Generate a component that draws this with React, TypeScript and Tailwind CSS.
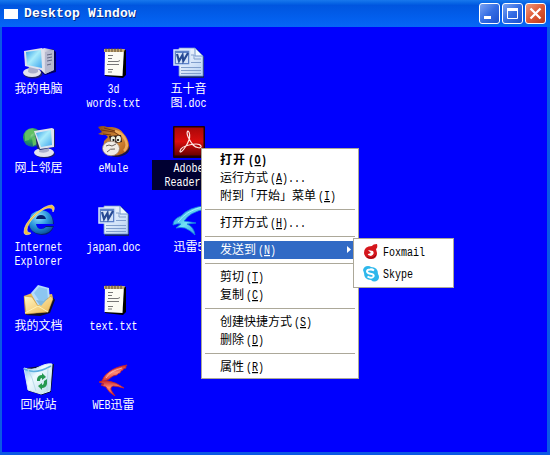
import React from "react";

// Renders Chinese runs full width and Latin runs as tall half-width cells.
function Txt({ children, bold = false, underline = false }: { children: string; bold?: boolean; underline?: boolean }) {
  const runs = children.match(/[\x20-\x7e]+|[^\x20-\x7e]+/g) ?? [];
  return (
    <>
      {runs.map((r, i) =>
        /^[\x20-\x7e]/.test(r) ? (
          <span
            key={i}
            className={`inline-block origin-[50%_75%] scale-y-[1.2] font-['Liberation_Mono',monospace] text-[10px] leading-[12px] whitespace-pre ${
              bold ? "tracking-[0.5px]" : ""
            } ${underline ? "underline underline-offset-1" : ""}`}
          >
            {r}
          </span>
        ) : (
          <span key={i} className={bold ? "tracking-[1px]" : ""}>
            {r}
          </span>
        )
      )}
    </>
  );
}

function Svg({ children, size = 32 }: { children: React.ReactNode; size?: number }) {
  return (
    <svg width={size} height={size} viewBox={`0 0 ${size} ${size}`} className="block shrink-0 overflow-visible">
      {children}
    </svg>
  );
}

function Defs() {
  return (
    <svg width="0" height="0" className="absolute">
      <defs>
        <linearGradient id="screen" x1="0" y1="0" x2="1" y2="1">
          <stop offset="0" stopColor="#2f9be8" />
          <stop offset=".45" stopColor="#a9ecfb" />
          <stop offset="1" stopColor="#3fa6ee" />
        </linearGradient>
        <linearGradient id="case" x1="0" y1="0" x2="1" y2="0">
          <stop offset="0" stopColor="#f4f3f7" />
          <stop offset="1" stopColor="#9297b4" />
        </linearGradient>
        <radialGradient id="globe" cx=".4" cy=".3" r=".8">
          <stop offset="0" stopColor="#a6e39c" />
          <stop offset=".45" stopColor="#2c9e55" />
          <stop offset="1" stopColor="#104c9e" />
        </radialGradient>
        <linearGradient id="red" x1="0" y1="0" x2="0" y2="1">
          <stop offset="0" stopColor="#a90808" />
          <stop offset=".5" stopColor="#d90e0e" />
          <stop offset="1" stopColor="#690000" />
        </linearGradient>
        <linearGradient id="page" x1="0" y1="0" x2="1" y2="1">
          <stop offset="0" stopColor="#ffffff" />
          <stop offset="1" stopColor="#b4d0f4" />
        </linearGradient>
        <radialGradient id="ie" cx=".4" cy=".3" r=".8">
          <stop offset="0" stopColor="#91e0ff" />
          <stop offset=".5" stopColor="#2995dd" />
          <stop offset="1" stopColor="#06458e" />
        </radialGradient>
        <linearGradient id="folder" x1="0" y1="0" x2="1" y2="1">
          <stop offset="0" stopColor="#fff8c8" />
          <stop offset="1" stopColor="#eeb74f" />
        </linearGradient>
        <linearGradient id="bin" x1="0" y1="0" x2="1" y2="1">
          <stop offset="0" stopColor="#6bb6ec" />
          <stop offset=".4" stopColor="#eefaff" />
          <stop offset="1" stopColor="#b9d9e9" />
        </linearGradient>
        <linearGradient id="mule" x1="0" y1="0" x2="1" y2="1">
          <stop offset="0" stopColor="#8b4814" />
          <stop offset=".55" stopColor="#dc8f3b" />
          <stop offset="1" stopColor="#a45215" />
        </linearGradient>
        <linearGradient id="bluebird" x1="0" y1="0" x2="1" y2="1">
          <stop offset="0" stopColor="#1688df" />
          <stop offset=".5" stopColor="#72e2f5" />
          <stop offset="1" stopColor="#1977d7" />
        </linearGradient>
        <linearGradient id="redbird" x1="0" y1="0" x2="0" y2="1">
          <stop offset="0" stopColor="#c8262c" />
          <stop offset=".45" stopColor="#ff8b78" />
          <stop offset="1" stopColor="#d0262a" />
        </linearGradient>
      </defs>
    </svg>
  );
}

const Computer = () => (
  <Svg>
    <path d="M18 3l12-1 3 3v20l-11 3-4-3z" fill="#000060" />
    <path d="M18 3l3-2 10 2v20l-9 4-4-4z" fill="url(#case)" />
    <path d="M22 5l9-2v20l-9 4z" fill="#b6b9cf" />
    <path d="M24 8l5-1M24 11l5-1M24 14l5-1M24 18l4-1" stroke="#626885" />
    <ellipse cx="10" cy="27" rx="9.5" ry="4.5" fill="#202067" />
    <ellipse cx="9" cy="25.5" rx="9" ry="4.5" fill="#e3e3ec" />
    <path d="M6 19l9 2v4q-5 3-10 0z" fill="#aaaec9" />
    <path d="M1 4l18-3 2 2v19l-3 1-16-4z" fill="#dfe2ed" />
    <path d="M3 5l15-2 1 18-15-3z" fill="url(#screen)" />
  </Svg>
);

const Network = () => (
  <Svg>
    <circle cx="9.5" cy="11.5" r="9.5" fill="url(#globe)" />
    <path d="M2 8q3-5 7-5l3 3-4 3-2 5-4 1zM9 12l5-2v8l-4 2z" fill="#62bf62" />
    <ellipse cx="22" cy="28" rx="10" ry="4" fill="#202067" />
    <ellipse cx="21" cy="26.5" rx="10" ry="4.5" fill="#e4e4ee" />
    <path d="M17 20l9-1v6q-4 3-10 1z" fill="#a9aecb" />
    <path d="M12 6l17-4 3 2v17l-15 3-3-2z" fill="#202868" />
    <path d="M11 5l18-3 2 1v18l-14 2z" fill="#dfe3ef" />
    <path d="M13 7l15-3 1 15-11 2z" fill="url(#screen)" />
  </Svg>
);

const Note = () => (
  <Svg>
    <path d="M8 3h20v25l-3 3-18-2z" fill="#000" />
    <path d="M7 2h19l-1.5 27-18-1z" fill="#fbfbf4" />
    <path d="M6 2h21l-1 3H6z" fill="#c4aa72" />
    <path d="M8 1v4M11 1v4M14 1v4M17 1v4M20 1v4M23 1v4" stroke="#5c4934" strokeWidth="1" />
    <path d="M10 8.5h5M10 11.5h4M10 14.5h10l2-1M9 17.5h12M10 22.5h5M10 25h4" stroke="#777" strokeWidth="1" fill="none" />
  </Svg>
);

const Word = () => (
  <Svg>
    <path d="M7 2h17l7 8v21H7z" fill="#101d72" />
    <path d="M6 1h16l8 8v20H6z" fill="url(#page)" stroke="#6d90c8" strokeWidth=".8" />
    <path d="M22 1v8h8z" fill="#eff6ff" stroke="#7396cc" />
    <path d="M18 8h3v4h7M18 15.5h10M8 20.5h20M8 23.5h20M8 26.5h20" stroke="#829fcd" fill="none" />
    <path d="M1 3h16v15H1z" fill="#5f83c8" stroke="#d5e5fb" strokeWidth="1.5" />
    <path d="M3 6h12v10H3z" fill="#d5e4f8" />
    <path d="M4 7l2 7 3.5-6 .8 6L15 6" fill="none" stroke="#264993" strokeWidth="2.2" />
  </Svg>
);

const Mule = () => (
  <Svg>
    <path d="M9 27q6 6 15 3 7-2 8-8l-4-9-7-6z" fill="#15124f" />
    <path d="M0 1q5-2 9 0l5 0q8 1 11 6 5 5 6 12 0 6-7 9-8 3-14 0-6-4-4-13l4-4q-2-3-6-2L0 8l4-2z" fill="url(#mule)" />
    <path d="M17 5q7 2 10 8 4 7-1 12" stroke="#f0ad5c" strokeWidth="2.5" fill="none" />
    <path d="M3 4l13 2 6 4M6 2l11 3M5 8l8 1" stroke="#713510" fill="none" />
    <path d="M11 10l12-1 1 7-11 2z" fill="#30211c" />
    <ellipse cx="15" cy="13.5" rx="2.3" ry="3.2" fill="#eef0e4" />
    <ellipse cx="20.5" cy="13" rx="2.4" ry="3.2" fill="#eef0e4" />
    <circle cx="15.5" cy="14" r="1.1" />
    <circle cx="20" cy="14" r="1.1" />
    <ellipse cx="13" cy="22.5" rx="8.5" ry="7.3" fill="#f0ece7" stroke="#8d7465" strokeWidth=".7" />
    <path d="M9 26q3-4 8-3M8 20q3-2 6 0l4-2" stroke="#6b625e" fill="none" />
  </Svg>
);

const Adobe = () => (
  <Svg>
    <rect x="0" y="0" width="32" height="32" rx="1" fill="#210008" />
    <rect x="1.5" y="1.5" width="29" height="28" fill="url(#red)" />
    <path d="M15 5c-3 2 2 10 5 14 3 3 9 4 8 1-2-4-20-1-21 5 0 4 7-5 9-11 1-3 1-8-1-9z" fill="none" stroke="#ffe9e5" strokeWidth="1.2" />
  </Svg>
);

const Explorer = () => (
  <Svg>
    <path d="M31 19H13q1 5 5 5 3 0 5-3h8q-3 9-12 9Q7 29 6 18 7 7 18 6q12 1 13 13z" fill="#041f6d" />
    <path d="M30 19H13q1 5 5 5 3 0 5-2h7q-3 7-12 7Q6 28 6 17 7 6 18 5q12 1 12 14zM13 14h10q-1-4-5-4t-5 4z" fill="url(#ie)" fillRule="evenodd" />
    <path d="M7 29q-6 2-6-2 0-8 10-17Q22 0 29 0q4 2 1 7 0-4-3-4-5-1-14 7-9 9-9 15 0 3 4 3z" fill="#f3bd3e" stroke="#fff2a3" strokeWidth=".6" />
  </Svg>
);

const Documents = () => (
  <Svg>
    <path d="M3 31L1 14l8-4 20 2 3 4-5 13-10 3z" fill="#11102a" />
    <path d="M1 12l8-3 6 3 14-2 1 4-5 14-23 2z" fill="#e9b957" />
    <path d="M8 9l7-8 11 3 1 13-12 5z" fill="#b5dcff" />
    <path d="M11 9l5-6 8 2 1 10-8 3z" fill="#8cc6f0" />
    <path d="M1 12l8 1 6 9 13-10 2 3-5 13-22 2z" fill="url(#folder)" stroke="#b78426" strokeWidth=".5" />
    <path d="M16 20l-3-4 7 1 5-3-7 8z" fill="#81b9df" />
    <path d="M2 29l13-7 10 6" stroke="#fff2b5" fill="none" />
  </Svg>
);

const Recycle = () => (
  <Svg>
    <path d="M4 5L31 1l-3 28-9 3-14-4z" fill="#080e35" />
    <path d="M1 5q8 3 15-1 8-4 13-3l-2 27-9 3-13-4z" fill="url(#bin)" stroke="#d6edf8" />
    <path d="M1 6q11 6 27-3" fill="none" stroke="#5eafe0" strokeWidth="1.5" />
    <path d="M5 7l4 8 4 13M25 5l-1 23" stroke="#badbea" fill="none" />
    <path d="M14 18V16q1-4 5-4v-2l4 4-4 3v-2q-2 0-2 3zM24 16v5q-1 4-5 4v2l-4-4 4-3v2q2 0 2-4z" fill="#25984f" />
  </Svg>
);

const RedBird = () => (
  <Svg>
    <path d="M29 2q-2 2-1 3-3 0-3 2-2 0-3 3-2 0-3 2-4 0-8 4l-6 3-1-1q2-6 7-9 6-5 18-7z" fill="url(#redbird)" stroke="#c52327" strokeWidth=".8" />
    <path d="M1 19q4-2 9-1 8 1 16 7-7-2-11-2-3 1-2 4l4 6q-7-4-9-9l-5-2 3-1z" fill="url(#redbird)" stroke="#c52327" strokeWidth=".8" />
    <path d="M24 5Q12 8 8 15" stroke="#ffc9be" strokeOpacity=".7" fill="none" />
  </Svg>
);

const BlueBird = () => (
  <Svg>
    <path d="M32 1Q16 2 8 11 0 14 0 20q5-2 8-1l-5 4q5-1 9 0 5 2 10 7-1-8-8-11l9-1-12-2Q17 7 32 4z" fill="url(#bluebird)" stroke="#1687df" strokeWidth=".8" />
    <path d="M29 2Q13 6 5 17" stroke="#9ef1ff" fill="none" />
  </Svg>
);

const columns = [
  [
    { icon: <Computer />, lines: ["我的电脑"] },
    { icon: <Network />, lines: ["网上邻居"] },
    { icon: <Explorer />, lines: ["Internet", "Explorer"] },
    { icon: <Documents />, lines: ["我的文档"] },
    { icon: <Recycle />, lines: ["回收站"] },
  ],
  [
    { icon: <Note />, lines: ["3d", "words.txt"] },
    { icon: <Mule />, lines: ["eMule"] },
    { icon: <Word />, lines: ["japan.doc"] },
    { icon: <Note />, lines: ["text.txt"] },
    { icon: <RedBird />, lines: ["WEB迅雷"] },
  ],
  [
    { icon: <Word />, lines: ["五十音", "图.doc"] },
    { icon: <Adobe />, lines: ["Adobe", "Reader 9"], selected: true },
    { icon: <BlueBird />, lines: ["迅雷5"] },
  ],
] as { icon: React.ReactNode; lines: string[]; selected?: boolean }[][];

type Entry = { text: string; k: string; tail?: string; bold?: boolean; sub?: boolean } | null;
const menu: Entry[] = [
  { text: "打开", k: "O", bold: true },
  { text: "运行方式", k: "A", tail: "..." },
  { text: "附到「开始」菜单", k: "I" },
  null,
  { text: "打开方式", k: "H", tail: "..." },
  null,
  { text: "发送到", k: "N", sub: true },
  null,
  { text: "剪切", k: "T" },
  { text: "复制", k: "C" },
  null,
  { text: "创建快捷方式", k: "S" },
  { text: "删除", k: "D" },
  null,
  { text: "属性", k: "R" },
];

function MenuRow({ item }: { item: Entry }) {
  if (!item)
    return (
      <div className="flex h-[9px] items-center px-px">
        <div className="h-px w-full bg-[#aca899]" />
      </div>
    );
  return (
    <div
      className={`flex h-[18px] items-center pr-[5px] pl-4 leading-[16px] whitespace-pre ${item.bold ? "font-bold" : ""} ${
        item.sub ? "bg-[#316ac5] text-white" : ""
      }`}
    >
      <span className="h-[18px]">
        <Txt bold={item.bold}>{item.text}</Txt>
        <span className="ml-[2px]">
          <Txt bold={item.bold}>{"("}</Txt>
        </span>
        <Txt bold={item.bold} underline>
          {item.k}
        </Txt>
        <Txt bold={item.bold}>{")" + (item.tail ?? "")}</Txt>
      </span>
      {item.sub && (
        <svg width="4" height="7" className="ml-auto -translate-y-px">
          <path d="M0 0l4 3.5L0 7z" fill="#fff" />
        </svg>
      )}
    </div>
  );
}

function WinButton({ red = false, children }: { red?: boolean; children: React.ReactNode }) {
  return (
    <div
      className={`size-[21px] rounded-[3px] border border-white bg-linear-to-br ${
        red ? "from-[#ef987b] via-[#df5935] to-[#bd3a18]" : "from-[#7ba2f2] via-[#346de4] to-[#1c50cf]"
      }`}
    >
      <svg width="19" height="19" className="block">
        {children}
      </svg>
    </div>
  );
}

export default function App() {
  return (
    <div className="relative flex h-[455px] w-[550px] flex-col overflow-hidden bg-[#0b59e4] font-['Noto_Sans_CJK_SC',sans-serif] text-[12px]">
      <Defs />
      <div className="flex h-[27px] shrink-0 items-center bg-linear-to-b from-[#1878ed] via-[#0055df] via-20% to-[#0566f8] pr-1 pl-1">
        <div className="h-[10px] w-[14px] bg-white" />
        <div className="ml-[6px] pt-px font-['Liberation_Mono',monospace] text-[13px] leading-5 font-bold tracking-[0.2px] text-white [text-shadow:1px_1px_0_#082b86]">
          Desktop Window
        </div>
        <div className="ml-auto flex gap-[2px]">
          <WinButton>
            <rect x="4" y="12" width="7" height="3" fill="#fff" />
          </WinButton>
          <WinButton>
            <path d="M4.5 4.5h10v10h-10z" fill="none" stroke="#fff" />
            <path d="M4 5.5h11" stroke="#fff" strokeWidth="3" />
          </WinButton>
          <WinButton red>
            <path d="M4.5 4.5l10 10M14.5 4.5l-10 10" stroke="#fff" strokeWidth="2.3" />
          </WinButton>
        </div>
      </div>
      <div className="mr-[3px] mb-[3px] ml-[2px] flex flex-1 gap-[2px] bg-[#0000fe] pt-5">
        {columns.map((column, i) => (
          <div key={i} className="flex w-[73px] flex-col">
            {column.map((item, j) => (
              <div key={j} className="flex h-[79px] flex-col items-center gap-[2px]">
                {item.icon}
                <div
                  className={`w-full pb-[2px] text-center leading-[14px] whitespace-nowrap text-white ${
                    item.selected ? "bg-[#000032]" : ""
                  }`}
                >
                  {item.lines.map((line) => (
                    <div key={line} className="h-[14px]">
                      <Txt>{line}</Txt>
                    </div>
                  ))}
                </div>
              </div>
            ))}
          </div>
        ))}
      </div>

      <div className="absolute top-[148px] left-[201px] w-[158px] border border-[#aca899] bg-white p-[2px] text-black">
        {menu.map((item, i) => (
          <MenuRow key={i} item={item} />
        ))}
      </div>

      <div className="absolute top-[238px] left-[353px] w-[101px] border border-[#aca899] bg-white p-[2px] text-black">
        <div className="flex h-[22px] items-center gap-1 pl-[7px]">
          <Svg size={16}>
            <path d="M14 0q-4 0-5 2Q1 2 1 9q1 6 7 6 6 0 6-6l-1-4q2-1 1-5z" fill="#d5171d" />
            <path d="M5 6l5 1q2 3-2 5-4-1-3-2l3-1z" fill="#fff" />
            <path d="M4 13q5 3 9-2" stroke="#8c060f" fill="none" />
          </Svg>
          <span className="h-[18px] leading-[16px]">
            <Txt>Foxmail</Txt>
          </span>
        </div>
        <div className="flex h-[22px] items-center gap-1 pl-[7px]">
          <Svg size={16}>
            <path d="M5 0Q1 0 0 4l1 3q0 7 7 7 3 3 7 0 2-3 0-6 0-7-7-7Q7 0 5 0z" fill="#2eb7eb" />
            <path d="M11 4.5Q9 3 7 3.5q-3 0-3 2 0 1.5 3.5 2.2 4 .6 3 2.8-2 2.5-6 0" stroke="#fff" strokeWidth="2" fill="none" />
          </Svg>
          <span className="h-[18px] leading-[16px]">
            <Txt>Skype</Txt>
          </span>
        </div>
      </div>
    </div>
  );
}
